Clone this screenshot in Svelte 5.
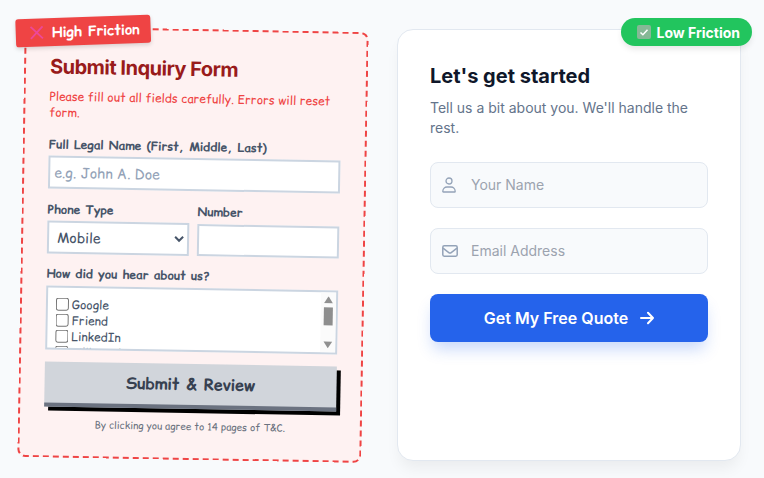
<script>
  const sources = ['Google', 'Friend', 'LinkedIn', 'Billboard', 'Other', 'Search'];
</script>

<div class="page">
  <section class="bad">
    <div class="bad-tag">
      <svg width="14" height="14" viewBox="0 0 14 14" fill="none" stroke="#ec4899" stroke-width="1.8"><path d="M1 1l12 12M13 1 1 13"/></svg>
      High Friction
    </div>
    <h2>Submit Inquiry Form</h2>
    <p class="warn">Please fill out all fields carefully. Errors will reset form.</p>
    <div class="field name">
      <div class="lbl">Full Legal Name (First, Middle, Last)</div>
      <input class="inp" placeholder="e.g. John A. Doe" />
    </div>
    <div class="phone">
      <div class="ptype">
        <div class="lbl">Phone Type</div>
        <select class="inp"><option>Mobile</option><option>Home</option></select>
      </div>
      <div class="pnum">
        <div class="lbl">Number</div>
        <input class="inp" />
      </div>
    </div>
    <div class="hear">
      <div class="lbl">How did you hear about us?</div>
      <div class="list">
        <div class="items">
          {#each sources as s}
            <label class="item"><input type="checkbox" />{s}</label>
          {/each}
        </div>
        <div class="sb">
          <svg width="9" height="7" viewBox="0 0 9 7"><path d="M4.5 0 9 7H0z" fill="#909090"/></svg>
          <div class="thumb"></div>
          <svg class="down" width="9" height="7" viewBox="0 0 9 7"><path d="M4.5 7 9 0H0z" fill="#909090"/></svg>
        </div>
      </div>
    </div>
    <button class="submit">Submit &amp; Review</button>
    <p class="fine">By clicking you agree to 14 pages of T&amp;C.</p>
  </section>

  <section class="good">
    <div class="good-tag">
      <svg width="14" height="14" viewBox="0 0 14 14"><rect width="14" height="14" rx="2" fill="#86b896"/><path d="M3.5 7.5l2.4 2.3 4.6-5" fill="none" stroke="#fff" stroke-width="1.5"/></svg>
      Low Friction
    </div>
    <h2>Let's get started</h2>
    <p class="sub">Tell us a bit about you. We'll handle the rest.</p>
    <div class="gfield">
      <svg class="ic" width="16" height="16" viewBox="0 0 16 16" fill="none" stroke="#94a3b8" stroke-width="1.3" stroke-linejoin="round"><circle cx="7" cy="4" r="3"/><path d="M.8 14.4c0-2.6 2-4.4 4.2-4.4h4c2.2 0 4.2 1.8 4.2 4.4 0 .3-.2.6-.6.6H1.4c-.4 0-.6-.3-.6-.6Z"/></svg>
      <input placeholder="Your Name" />
    </div>
    <div class="gfield">
      <svg class="ic" width="16" height="16" viewBox="0 0 16 16" fill="none" stroke="#94a3b8" stroke-width="1.5" stroke-linejoin="round"><rect x=".8" y="2.8" width="14.4" height="10.4" rx="1.4"/><path d="M1 5.2 6.8 9.6a2 2 0 0 0 2.4 0L15 5.2"/></svg>
      <input placeholder="Email Address" />
    </div>
    <button class="cta">Get My Free Quote
      <svg width="14" height="14" viewBox="0 0 14 14" fill="none" stroke="#fff" stroke-width="2" stroke-linecap="round" stroke-linejoin="round"><path d="M1 7h12M8 1.8 13 7l-5 5.2"/></svg>
    </button>
  </section>
</div>

<style>
  :global(body) { margin: 0; background: #f8fafc; }
  .page { display: grid; grid-template-columns: 344px 344px; gap: 32px; padding: 29px 0 0 21px; width: 764px; height: 478px; box-sizing: border-box; overflow: hidden; font-family: Inter, sans-serif; }

  .bad { position: relative; box-sizing: border-box; height: 431px; padding: 24px 24px 0 24px; background: #fef2f2; border: 2px dashed #ef4444; border-radius: 8px; transform: rotate(1deg); font-family: "Comic Relief", cursive; }
  .bad-tag { position: absolute; left: -11px; top: -12px; display: flex; align-items: center; gap: 8px; padding: 0 11px 0 14px; height: 28px; background: #ef4444; color: #fff; font-weight: 700; font-size: 14px; border-radius: 3px; transform: rotate(-3deg); box-shadow: 0 2px 4px rgba(0,0,0,.15); }
  .bad h2 { margin: 0; font-family: Inter, sans-serif; font-size: 20px; line-height: 28px; font-weight: 700; letter-spacing: -.5px; color: #991b1b; }
  .warn { margin: 8px 0 0; font-size: 12px; line-height: 15.5px; color: #ef4444; }
  .lbl { font-size: 12px; line-height: 16px; font-weight: 700; color: #475569; }
  .inp { display: block; box-sizing: border-box; width: 100%; border: 2px solid #cbd5e1; background: #fff; border-radius: 0; font-family: inherit; outline: none; color: #475569; }
  .field { margin-top: 17px; }
  .field .lbl { margin-bottom: 3px; }
  .field .inp { height: 33px; padding: 0 4px; font-size: 14px; }
  .inp::placeholder { color: #94a3b8; }
  .phone { display: grid; grid-template-columns: 1fr 1fr; gap: 8px; margin: 13px 0 0; }
  .ptype .inp { height: 33px; margin-top: 3px; font-size: 14px; padding: 0 4px; }
  .pnum .inp { height: 32px; margin-top: 4px; font-size: 14px; padding: 0 4px; }
  .hear { margin: 12px 0 0; }
  .list { display: flex; box-sizing: border-box; margin-top: 4px; height: 64px; border: 2px solid #cbd5e1; background: #fff; overflow: hidden; font-size: 12px; color: #475569; }
  .items { flex: 1; padding: 8px; min-width: 0; overflow: hidden; }
  .sb { flex: none; display: flex; flex-direction: column; align-items: center; width: 15px; height: 60px; box-sizing: border-box; padding-top: 4px; background: #fbfbfb; }
  .thumb { width: 9px; height: 18px; margin-top: 4px; background: #8e8e8e; }
  .down { margin-top: auto; margin-bottom: 4px; }
  .item { display: flex; align-items: center; gap: 3px; height: 16px; }
  .item input { margin: 0; width: 13px; height: 13px; }
  .submit { display: block; box-sizing: border-box; width: 100%; margin: 12px 0 0; padding: 0 0 2px; height: 45px; border: none; border-bottom: 4px solid #6b7280; background: #d1d5db; box-shadow: 4px 4px 0 #000; font-family: inherit; font-size: 16px; font-weight: 700; color: #374151; }
  .fine { margin: 10px 0 0; text-align: center; font-size: 10px; line-height: 14px; color: #6b7280; }

  .good { position: relative; box-sizing: border-box; height: 432px; padding: 32px; background: #fff; border: 1px solid #e2e8f0; border-radius: 16px; box-shadow: 0 10px 15px -3px rgba(0,0,0,.06); }
  .good-tag { position: absolute; right: -12px; top: -12px; display: flex; align-items: center; gap: 5px; padding: 0 12px 0 16px; height: 28px; box-sizing: border-box; background: #22c55e; color: #fff; font-size: 14px; font-weight: 700; border-radius: 999px; box-shadow: 0 4px 6px -1px rgba(0,0,0,.1); }
  .good h2 { margin: 0; font-size: 20px; line-height: 28px; font-weight: 700; color: #0f172a; }
  .sub { margin: 8px 0 0; font-size: 14px; line-height: 20px; color: #64748b; }
  .gfield { display: flex; align-items: center; gap: 13px; height: 46px; box-sizing: border-box; margin-top: 24px; padding: 0 11px; background: #f8fafc; border: 1px solid #e2e8f0; border-radius: 8px; }
  .gfield + .gfield { margin-top: 20px; }
  .gfield input { flex: 1; min-width: 0; padding: 0 0 2px; border: none; background: none; outline: none; font-family: inherit; font-size: 14px; }
  .gfield input::placeholder { color: #9ca3af; }
  .cta { display: flex; align-items: center; justify-content: center; gap: 12px; width: 100%; height: 48px; margin-top: 20px; border: none; border-radius: 8px; background: #2563eb; color: #fff; font-family: inherit; font-size: 16px; font-weight: 600; box-shadow: 0 10px 15px -3px rgba(37,99,235,.25); }
</style>
